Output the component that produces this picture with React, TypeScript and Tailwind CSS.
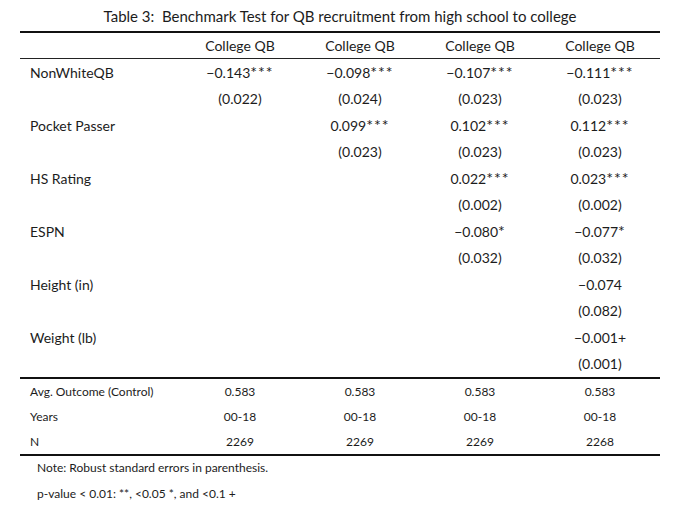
import React from 'react'

type Row = { label: string; cells: string[] }

const body: Row[] = [
  { label: 'NonWhiteQB', cells: ['−0.143***', '−0.098***', '−0.107***', '−0.111***'] },
  { label: '', cells: ['(0.022)', '(0.024)', '(0.023)', '(0.023)'] },
  { label: 'Pocket Passer', cells: ['', '0.099***', '0.102***', '0.112***'] },
  { label: '', cells: ['', '(0.023)', '(0.023)', '(0.023)'] },
  { label: 'HS Rating', cells: ['', '', '0.022***', '0.023***'] },
  { label: '', cells: ['', '', '(0.002)', '(0.002)'] },
  { label: 'ESPN', cells: ['', '', '−0.080*', '−0.077*'] },
  { label: '', cells: ['', '', '(0.032)', '(0.032)'] },
  { label: 'Height (in)', cells: ['', '', '', '−0.074'] },
  { label: '', cells: ['', '', '', '(0.082)'] },
  { label: 'Weight (lb)', cells: ['', '', '', '−0.001+'] },
  { label: '', cells: ['', '', '', '(0.001)'] },
]

const stats: Row[] = [
  { label: 'Avg. Outcome (Control)', cells: ['0.583', '0.583', '0.583', '0.583'] },
  { label: 'Years', cells: ['00-18', '00-18', '00-18', '00-18'] },
  { label: 'N', cells: ['2269', '2269', '2269', '2268'] },
]

// stars printed larger and spaced out, as in the source typeface
function Cell({ v }: { v: string }) {
  const m = v.match(/^(.*?)(\*+)$/)
  if (!m) return <div className="text-center">{v}</div>
  return (
    <div className="text-center">
      {m[1]}
      <span className="text-[16px] tracking-[1px] leading-none">{m[2]}</span>
    </div>
  )
}

export default function App() {
  return (
    <div className="w-[680px] h-[515px] bg-white text-[#1c1c1c] font-['Lato',sans-serif] overflow-hidden">
      {/* Caption */}
      <div className="h-[31px] flex items-center justify-center pt-[2px] text-[15px]">
        Table 3:&nbsp; Benchmark Test for QB recruitment from high school to college
      </div>

      <div className="mx-[20px] w-[640px]">
        <div className="border-t-2 border-[#111]" />

        {/* Header */}
        <div className="grid grid-cols-[160px_repeat(4,120px)] h-[26px] items-center text-[14px] border-b border-[#222]">
          <div />
          {[0, 1, 2, 3].map((i) => (
            <div key={i} className="text-center">College QB</div>
          ))}
        </div>

        {/* Coefficients */}
        <div>
          {body.map((r, i) => (
            <div key={i} className="grid grid-cols-[160px_repeat(4,120px)] h-[26.5px] items-center text-[14px]">
              <div className="pl-[10px]">{r.label}</div>
              {r.cells.map((c, j) => (
                <Cell key={j} v={c} />
              ))}
            </div>
          ))}
        </div>

        <div className="border-t-2 border-[#111]" />

        {/* Summary stats */}
        {stats.map((r, i) => (
          <div key={i} className="grid grid-cols-[160px_repeat(4,120px)] h-[25px] items-center text-[12px]">
            <div className="pl-[10px]">{r.label}</div>
            {r.cells.map((c, j) => (
              <div key={j} className="text-center">{c}</div>
            ))}
          </div>
        ))}

        <div className="border-t-2 border-[#111]" />

        {/* Notes */}
        <div className="pl-[17px] text-[12px]">
          <div className="h-[24px] flex items-center">Note: Robust standard errors in parenthesis.</div>
          <div className="h-[27px] flex items-center">p-value &lt; 0.01: **, &lt;0.05 *, and &lt;0.1 +</div>
        </div>
      </div>
    </div>
  )
}
